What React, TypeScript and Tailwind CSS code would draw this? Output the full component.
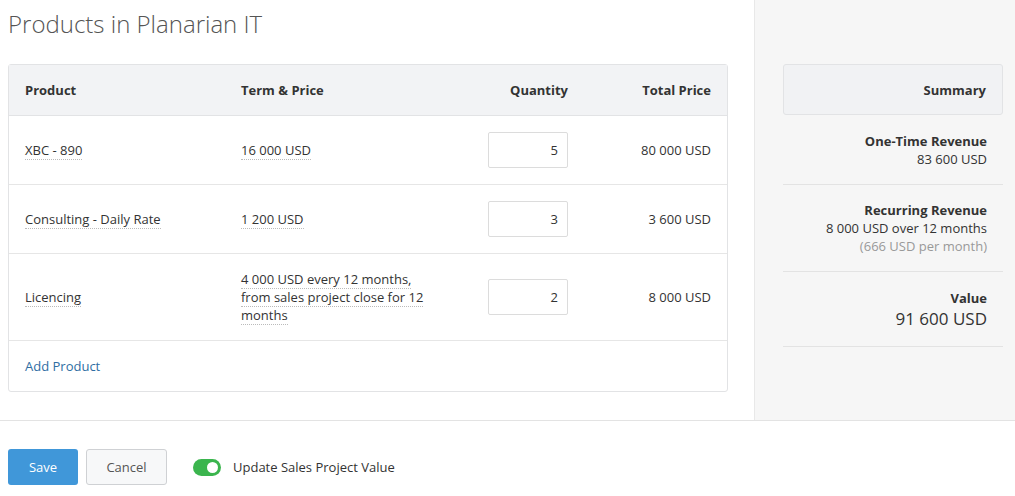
const rows = [
  { name: 'XBC - 890', term: '16 000 USD', qty: '5', total: '80 000 USD' },
  { name: 'Consulting - Daily Rate', term: '1 200 USD', qty: '3', total: '3 600 USD' },
  {
    name: 'Licencing',
    term: '4 000 USD every 12 months, from sales project close for 12 months',
    qty: '2',
    total: '8 000 USD',
  },
];

const grid = 'grid grid-cols-[216px_216px_143px_1fr] items-center';

export default function App() {
  return (
    <div className="w-[1015px] h-[496px] bg-white text-[13px] leading-[18px] text-[#333] font-['Open_Sans',sans-serif] flex flex-col overflow-hidden">
      <div className="flex h-[420px]">
        {/* Main */}
        <div className="flex-1 pl-2 pr-[26px]">
          <h1 className="pt-[8px] h-[64px] text-[24px] leading-[32px] font-light text-[#555]">
            Products in Planarian IT
          </h1>
          <div className="border border-[#e2e3e5] rounded-[3px]">
            <div className={`${grid} h-[51px] bg-[#f2f3f5] border-b border-[#e2e3e5] font-bold`}>
              <div className="pl-4">Product</div>
              <div className="pl-4">Term &amp; Price</div>
              <div className="pr-4 text-right">Quantity</div>
              <div className="pr-4 text-right">Total Price</div>
            </div>
            {rows.map((r) => (
              <div key={r.name} className={`${grid} py-4 border-b border-[#e6e6e6]`}>
                <div className="pl-4">
                  <span className="border-b border-dotted border-[#bbb]">{r.name}</span>
                </div>
                <div className="pl-4 pr-2">
                  <span className="border-b border-dotted border-[#bbb]">{r.term}</span>
                </div>
                <div className="pr-4 flex justify-end">
                  <div className="w-[80px] h-[36px] border border-[#dcdcdc] rounded-[2px] flex items-center justify-end pr-[9px]">
                    {r.qty}
                  </div>
                </div>
                <div className="pr-4 text-right">{r.total}</div>
              </div>
            ))}
            <div className="px-4 py-4 text-[#2f6ea3]">Add Product</div>
          </div>
        </div>

        {/* Summary sidebar */}
        <div className="w-[261px] bg-[#f6f6f6] border-l border-[#e8e8e8] pt-[64px] pl-[28px] pr-[12px]">
          <div className="h-[51px] bg-[#f1f2f4] border border-[#e2e3e5] rounded-[3px] flex items-center justify-end pr-4 font-bold">
            Summary
          </div>
          <div className="text-right pr-4">
            <div className="pt-[17px] pb-[16px] border-b border-[#e3e3e3] -mr-4 pr-4">
              <div className="font-bold">One-Time Revenue</div>
              <div>83 600 USD</div>
            </div>
            <div className="pt-[16px] pb-[16px] border-b border-[#e3e3e3] -mr-4 pr-4">
              <div className="font-bold">Recurring Revenue</div>
              <div>8 000 USD over 12 months</div>
              <div className="text-[#999]">(666 USD per month)</div>
            </div>
            <div className="pt-[17px] pb-[15px] border-b border-[#e3e3e3] -mr-4 pr-4">
              <div className="font-bold">Value</div>
              <div className="text-[17px] leading-[24px]">91 600 USD</div>
            </div>
          </div>
        </div>
      </div>

      {/* Footer */}
      <div className="flex-1 border-t border-[#e3e3e3] pt-[28px] pl-2 flex items-start">
        <button className="w-[70px] h-[36px] bg-[#4097d9] text-white rounded-[3px]">Save</button>
        <button className="ml-2 w-[81px] h-[36px] bg-[#f7f8f9] border border-[#cfd1d4] text-[#555] rounded-[3px]">
          Cancel
        </button>
        <div className="ml-[26px] h-[36px] flex items-center">
          <div className="w-[28px] h-[17px] rounded-full bg-[#3bb54e] flex items-center justify-end pr-[3px]">
            <div className="w-[11px] h-[11px] rounded-full bg-white" />
          </div>
          <span className="ml-3 text-[#333]">Update Sales Project Value</span>
        </div>
      </div>
    </div>
  );
}
